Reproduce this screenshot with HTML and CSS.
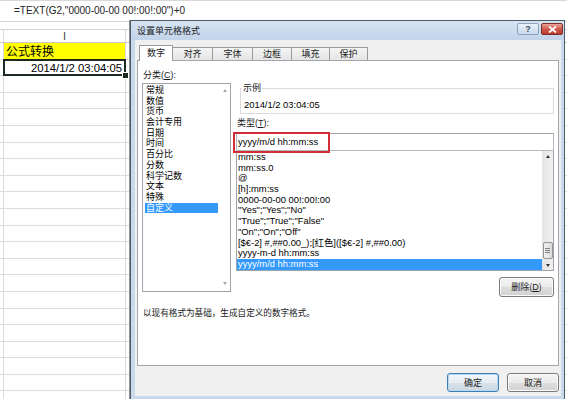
FILE: index.html
```html
<!DOCTYPE html>
<html lang="zh-CN">
<head>
    <meta charset="UTF-8">
    <title>设置单元格格式</title>
    <link rel="stylesheet" href="styles.css">
</head>
<body>
    <div class="formula-bar">=TEXT(G2,"0000-00-00 00!:00!:00")+0</div>

    <div class="sheet">
        <div class="col-head"><div class="cell">I</div></div>
        <div class="row"><div class="cell title-cell">公式转换</div></div>
        <div class="row"><div class="cell active-cell">2014/1/2 03:04:05<span class="fill-handle"></span></div></div>
        <div class="row"><div class="cell"></div></div>
        <div class="row"><div class="cell"></div></div>
        <div class="row"><div class="cell"></div></div>
        <div class="row"><div class="cell"></div></div>
        <div class="row"><div class="cell"></div></div>
        <div class="row"><div class="cell"></div></div>
        <div class="row"><div class="cell"></div></div>
        <div class="row"><div class="cell"></div></div>
        <div class="row"><div class="cell"></div></div>
        <div class="row"><div class="cell"></div></div>
        <div class="row"><div class="cell"></div></div>
        <div class="row"><div class="cell"></div></div>
        <div class="row"><div class="cell"></div></div>
        <div class="row"><div class="cell"></div></div>
        <div class="row"><div class="cell"></div></div>
        <div class="row"><div class="cell"></div></div>
        <div class="row"><div class="cell"></div></div>
        <div class="row"><div class="cell"></div></div>
        <div class="row"><div class="cell"></div></div>
        <div class="row"><div class="cell"></div></div>
    </div>

    <div class="dialog">
        <div class="titlebar">
            <span class="title">设置单元格格式</span>
            <div class="caption">
                <span class="cap-btn help">?</span>
                <span class="cap-btn close">
                    <svg width="9" height="7" viewBox="0 0 9 7"><path d="M1 0.5 L8 6.5 M8 0.5 L1 6.5" stroke="#fff" stroke-width="1.8"/></svg>
                </span>
            </div>
        </div>

        <div class="client">
            <div class="tabs">
                <span class="tab active">数字</span>
                <span class="tab w41">对齐</span>
                <span class="tab w41">字体</span>
                <span class="tab w40">边框</span>
                <span class="tab w39">填充</span>
                <span class="tab w39">保护</span>
            </div>

            <div class="panel">
                <div class="col-left">
                    <div class="label">分类(<u>C</u>):</div>
                    <div class="listbox cat-list">
                        <ul>
                            <li>常规</li>
                            <li>数值</li>
                            <li>货币</li>
                            <li>会计专用</li>
                            <li>日期</li>
                            <li>时间</li>
                            <li>百分比</li>
                            <li>分数</li>
                            <li>科学记数</li>
                            <li>文本</li>
                            <li>特殊</li>
                            <li class="selected">自定义</li>
                        </ul>
                        <div class="vscroll plain">
                            <span class="arrow up grey"></span>
                            <span class="arrow down grey"></span>
                        </div>
                    </div>
                </div>

                <div class="col-right">
                    <fieldset class="sample">
                        <legend>示例</legend>
                        <div class="sample-text">2014/1/2 03:04:05</div>
                    </fieldset>
                    <div class="label type-label">类型(<u>T</u>):</div>
                    <div class="type-box">yyyy/m/d hh:mm:ss<span class="mark"></span></div>
                    <div class="listbox fmt-list">
                        <ul>
                            <li>mm:ss</li>
                            <li>mm:ss.0</li>
                            <li>@</li>
                            <li>[h]:mm:ss</li>
                            <li>0000-00-00 00!:00!:00</li>
                            <li>"Yes";"Yes";"No"</li>
                            <li>"True";"True";"False"</li>
                            <li>"On";"On";"Off"</li>
                            <li>[$€-2] #,##0.00_);[红色]([$€-2] #,##0.00)</li>
                            <li>yyyy-m-d hh:mm:ss</li>
                            <li class="selected">yyyy/m/d hh:mm:ss</li>
                        </ul>
                        <div class="vscroll">
                            <span class="sb-btn"><span class="arrow up"></span></span>
                            <div class="track"><span class="thumb"></span></div>
                            <span class="sb-btn"><span class="arrow down"></span></span>
                        </div>
                    </div>
                    <div class="btn-row">
                        <button class="btn delete">删除(<u>D</u>)</button>
                    </div>
                </div>

                <p class="desc">以现有格式为基础，生成自定义的数字格式。</p>
            </div>

            <div class="footer">
                <button class="btn default">确定</button>
                <button class="btn">取消</button>
            </div>
        </div>
    </div>
</body>
</html>
```

FILE: styles.css
```css
body {
    margin: 0;
    width: 567px;
    height: 399px;
    overflow: hidden;
    position: relative;
    background-color: #fff;
    font-family: "Liberation Sans", "Noto Sans CJK SC", sans-serif;
    color: #000;
}

/* sheet behind the dialog */
.formula-bar {
    height: 22px;
    box-sizing: border-box;
    border-top: 1px solid #d8d8d8;
    border-bottom: 1px solid #d4d4d4;
    padding-left: 14px;
    font-size: 10px;
    line-height: 20px;
    color: #222;
    white-space: nowrap;
}
.sheet {
    margin-top: 7px;
}
.col-head {
    height: 14px;
    box-sizing: border-box;
    border-top: 1px solid #d4d4d4;
    border-bottom: 1px solid #c8c8c8;
}
.col-head .cell {
    text-align: center;
    font-size: 11px;
    line-height: 12px;
    color: #444;
}
.row {
    height: 16.6px;
    box-sizing: border-box;
    border-bottom: 1px solid #dcdcdc;
}
.cell {
    margin-left: 3px;
    width: 123px;
    height: 100%;
    box-sizing: border-box;
    border-left: 1px solid #dcdcdc;
    border-right: 1px solid #dcdcdc;
}
.title-cell {
    background-color: #ffff00;
    font-family: "Noto Sans CJK SC", sans-serif;
    font-size: 12px;
    line-height: 15px;
    padding-left: 2px;
}
.active-cell {
    position: relative;
    text-align: right;
    padding-right: 3px;
    font-size: 11.3px;
    line-height: 16px;
}
.active-cell::after {
    content: "";
    position: absolute;
    left: -1px;
    right: -1px;
    top: -1px;
    bottom: -1px;
    border: 2px solid #1d2a22;
}
.fill-handle {
    position: absolute;
    right: -4px;
    bottom: -4px;
    width: 5px;
    height: 5px;
    background-color: #1d2a22;
    border: 1px solid #fff;
    z-index: 1;
}

/* dialog window */
.dialog {
    position: absolute;
    left: 130px;
    top: 20px;
    width: 435px;
    height: 380px;
    box-sizing: border-box;
    border: 1px solid #4f5b68;
    background-color: #c9d9ec;
    display: flex;
    flex-direction: column;
    font-size: 9.4px;
    box-shadow: -1px 0 0 #8b8f94;
}
.titlebar {
    height: 19px;
    flex: none;
    display: flex;
    justify-content: space-between;
    align-items: flex-start;
    padding: 0 1px 0 6px;
    background: linear-gradient(#d6e3f2, #c2d4ea);
}
.title {
    font-family: "Noto Sans CJK SC", sans-serif;
    font-size: 9px;
    line-height: 19px;
    color: #1b1b1b;
}
.caption {
    display: flex;
    gap: 2px;
    margin-top: 2px;
}
.cap-btn {
    width: 22px;
    height: 12px;
    box-sizing: border-box;
    border-radius: 2px;
    display: flex;
    align-items: center;
    justify-content: center;
}
.help {
    border: 1px solid #8ea3bc;
    background: linear-gradient(#eaf1f9, #c9d8ea);
    font-size: 9px;
    font-weight: bold;
    color: #3c4f66;
    line-height: 10px;
}
.close {
    border: 1px solid #7b2e28;
    background: linear-gradient(#eba69c, #d0574b 50%, #bd3c31);
}

.client {
    flex: 1;
    margin: 0 3px 3px 4px;
    background-color: #f0f0f0;
    padding: 5px 2px 0 2px;
    display: flex;
    flex-direction: column;
}

/* tabs */
.tabs {
    display: flex;
    align-items: flex-end;
    margin-left: 2px;
    height: 15px;
}
.tab {
    height: 13px;
    box-sizing: border-box;
    border: 1px solid #989ba3;
    border-bottom: none;
    margin-left: -1px;
    background: linear-gradient(#f5f5f5, #e4e4e4);
    font-family: "Noto Sans CJK SC", sans-serif;
    font-size: 9px;
    line-height: 12px;
    text-align: center;
    color: #1a1a1a;
}
.tab.active {
    width: 34px;
    height: 16px;
    margin-left: 0;
    margin-bottom: -1px;
    line-height: 14px;
    background: #fff;
    position: relative;
    z-index: 1;
}
.w41 { width: 41px; }
.w40 { width: 40px; }
.w39 { width: 39px; }

.panel {
    height: 306px;
    box-sizing: border-box;
    border: 1px solid #a3a6ad;
    background-color: #fff;
    display: grid;
    grid-template-columns: 89px 318px;
    column-gap: 5px;
    align-content: start;
    align-items: start;
    padding: 8px 4px 0 4px;
}
.label {
    font-family: "Liberation Sans", "Noto Sans CJK SC", sans-serif;
    font-size: 9px;
    line-height: 12px;
    color: #1a1a1a;
}
.col-left .label {
    margin-bottom: 2px;
    padding-left: 1px;
}

.listbox {
    display: flex;
    box-sizing: border-box;
    border: 1px solid #9fa3aa;
    background-color: #fff;
}
.listbox ul {
    flex: 1;
    list-style: none;
    margin: 0;
    padding: 1px 0 0 0;
}
.listbox li {
    height: 10.7px;
    line-height: 10.7px;
    white-space: nowrap;
    overflow: hidden;
}
.listbox li.selected {
    background-color: #3399ff;
    color: #fff;
}
.cat-list {
    height: 209px;
}
.cat-list ul {
    margin: 0 1px 0 2px;
    font-size: 9px;
}
.cat-list li {
    padding-left: 1px;
}
.fmt-list {
    height: 121px;
    margin-top: -1px;
}
.fmt-list li {
    padding-left: 1px;
}

.vscroll {
    width: 11px;
    display: flex;
    flex-direction: column;
    justify-content: space-between;
    align-items: center;
}
.vscroll.plain {
    padding: 5px 0 6px;
}
.fmt-list .vscroll {
    background: linear-gradient(to right, #e4e4e4, #f0f0f0);
    justify-content: flex-start;
}
.sb-btn {
    width: 11px;
    height: 10px;
    flex: none;
    display: flex;
    align-items: center;
    justify-content: center;
}
.track {
    flex: 1;
    display: flex;
    flex-direction: column;
    justify-content: flex-end;
    align-items: center;
    padding-bottom: 1px;
}
.thumb {
    width: 10px;
    height: 17px;
    box-sizing: border-box;
    border: 1px solid #959595;
    border-radius: 2px;
    background:
        linear-gradient(#7f7f7f, #7f7f7f) center 5px / 5px 1px no-repeat,
        linear-gradient(#7f7f7f, #7f7f7f) center 7px / 5px 1px no-repeat,
        linear-gradient(#7f7f7f, #7f7f7f) center 9px / 5px 1px no-repeat,
        linear-gradient(to right, #f3f3f3, #dadada);
}
.arrow {
    width: 0;
    height: 0;
    border-left: 2.5px solid transparent;
    border-right: 2.5px solid transparent;
}
.arrow.up {
    border-bottom: 3px solid #333;
}
.arrow.down {
    border-top: 3px solid #333;
}
.arrow.grey.up { border-bottom-color: #a6a6a6; }
.arrow.grey.down { border-top-color: #a6a6a6; }

/* sample group */
.sample {
    margin: 13px 0 0 4px;
    padding: 5px 0 2px 2px;
    border: 1px solid #dcdcdc;
    min-width: 0;
}
.sample legend {
    padding: 0 1px;
    margin-left: -1px;
    font-family: "Noto Sans CJK SC", sans-serif;
    font-size: 9px;
    line-height: 12px;
    color: #1a1a1a;
}
.sample-text {
    line-height: 12px;
    padding-left: 1px;
}
.type-label {
    margin-top: 3px;
    padding-left: 1px;
}
.type-box {
    position: relative;
    margin-top: 4px;
    height: 18px;
    box-sizing: border-box;
    border: 1px solid #b5b8bf;
    border-top-color: #a0a3aa;
    line-height: 16px;
    padding-left: 1px;
}
.mark {
    position: absolute;
    left: -4px;
    top: -2px;
    width: 97px;
    height: 21px;
    box-sizing: border-box;
    border: 2px solid #d22e35;
}

.btn-row {
    display: flex;
    justify-content: flex-end;
    margin-top: 6px;
}
.btn {
    height: 19px;
    box-sizing: border-box;
    border: 1px solid #7a7a7a;
    border-radius: 3px;
    background: linear-gradient(#f4f4f4, #ebebeb 50%, #dedede 51%, #d2d2d2);
    box-shadow: inset 0 0 0 1px #fbfbfb;
    font-family: "Noto Sans CJK SC", sans-serif;
    font-size: 9px;
    line-height: 15px;
    color: #1a1a1a;
    padding: 0;
}
.btn u {
    font-family: "Liberation Sans", sans-serif;
}
.delete {
    width: 55px;
    height: 20px;
}
.desc {
    grid-column: 1 / -1;
    margin: 9px 0 0 1px;
    font-family: "Noto Sans CJK SC", sans-serif;
    font-size: 8.6px;
    line-height: 12px;
    color: #1a1a1a;
}

.footer {
    display: flex;
    justify-content: flex-end;
    gap: 8px;
    margin-top: 7px;
}
.footer .btn {
    width: 52px;
}
.btn.default {
    border-color: #3d7fb5;
    box-shadow: inset 0 0 0 1px #b6d8f0;
    background: linear-gradient(#f1f6fa, #e6edf3 50%, #d8e1ea 51%, #cdd8e2);
}
```
